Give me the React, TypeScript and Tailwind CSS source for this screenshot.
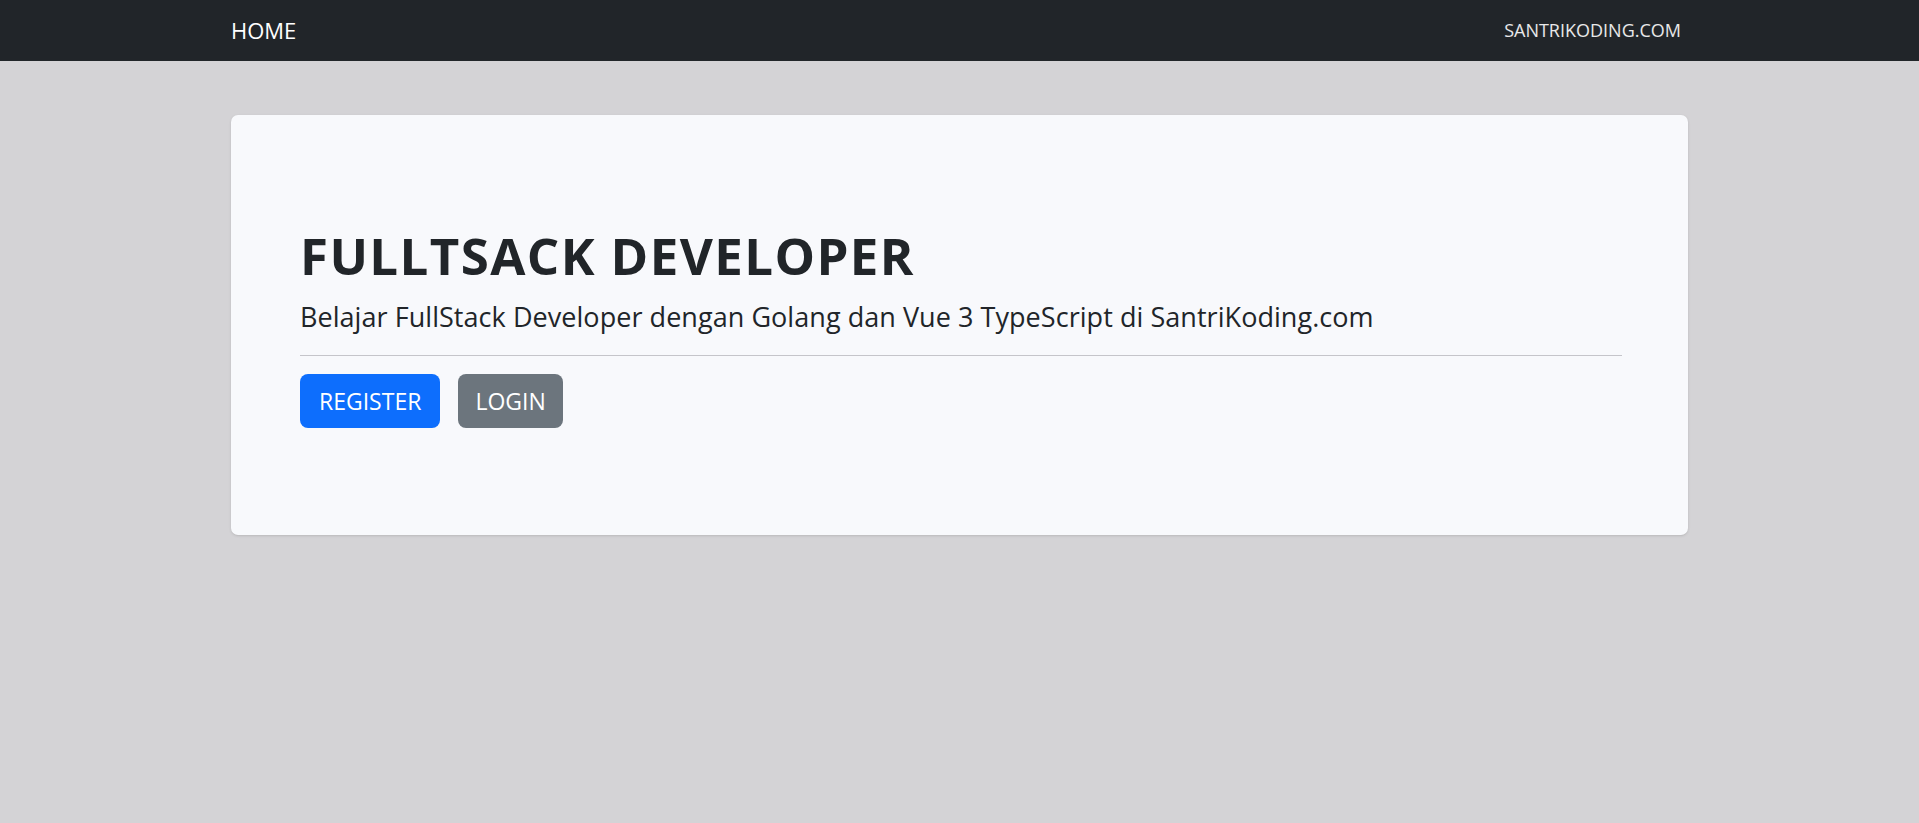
export default function App() {
  return (
    <div
      className="min-h-screen bg-[#d4d3d6] text-[#212529]"
      style={{ fontFamily: '"Open Sans", "Noto Sans", sans-serif' }}
    >
      {/* Navbar */}
      <nav className="h-[61px] bg-[#212529]">
        <div className="mx-auto flex h-full w-[1457px] items-center justify-between pr-[7px]">
          <a href="#" className="text-[22px] text-white">
            HOME
          </a>
          <a href="#" className="text-[18px] text-white/90">
            SANTRIKODING.COM
          </a>
        </div>
      </nav>

      {/* Jumbotron card */}
      <div className="mx-auto mt-[54px] w-[1457px] rounded-[7px] bg-[#f8f9fc] pl-[69px] pr-[66px] pt-[110px] pb-[107px] shadow-sm">
        <h1 className="text-[51px] font-bold leading-[60px] tracking-[1.4px]">FULLTSACK DEVELOPER</h1>
        <p className="mt-[12px] text-[27px] leading-[39px] tracking-[0.05px]">
          Belajar FullStack Developer dengan Golang dan Vue 3 TypeScript di SantriKoding.com
        </p>
        <hr className="mt-[19px] border-t border-[#c5c5ca]" />
        <div className="mt-[18px] flex gap-[18px]">
          <button className="flex h-[54px] items-center rounded-[8px] bg-[#0d6efd] px-[19px] text-[23px] text-white">
            REGISTER
          </button>
          <button className="flex h-[54px] items-center rounded-[8px] bg-[#6c757d] px-[17px] text-[23px] text-white">
            LOGIN
          </button>
        </div>
      </div>
    </div>
  );
}
